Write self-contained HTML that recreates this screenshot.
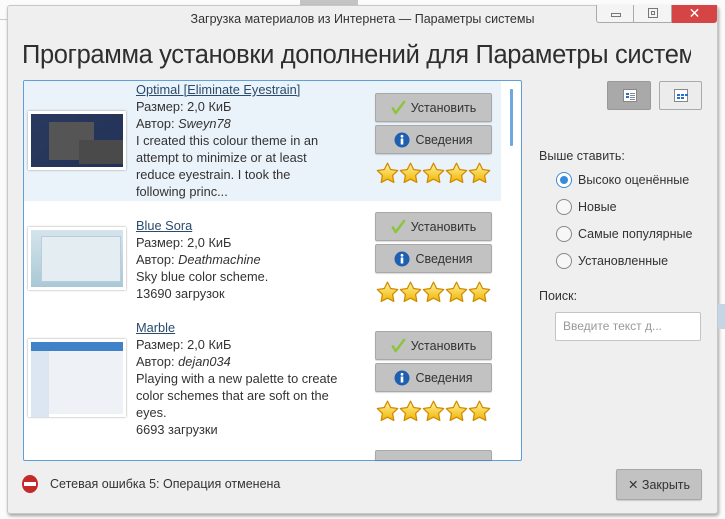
<!DOCTYPE html>
<html><head><meta charset="utf-8"><style>
*{margin:0;padding:0;box-sizing:border-box}
body{width:725px;height:519px;background:#fbfbfb;font-family:"Liberation Sans","DejaVu Sans",sans-serif;font-size:12.5px;color:#333;position:relative;overflow:hidden}
.a{position:absolute;white-space:nowrap}
.win{position:absolute;left:7px;top:5px;width:711px;height:509px;background:#efefef;border:1px solid #c8c8c8;border-radius:3px;box-shadow:1px 2px 3px rgba(0,0,0,.35)}
.btn{position:absolute;background:#c2c2c2;border:1px solid #a8a8a8;border-radius:2px;box-shadow:0 1px 1px rgba(0,0,0,.15);font-size:12.5px;color:#333;display:flex;align-items:center;justify-content:center;gap:5px}
.t{position:absolute;left:136px;line-height:17px;font-size:12.8px;color:#333}
.t u{color:#2a4a6e}
.thumb{position:absolute;left:28px;width:98px;border:3px solid #fff;box-shadow:0 0 2px rgba(0,0,0,.4)}
.stars{position:absolute;left:376px;display:flex;gap:0px}
.radio{position:absolute;left:556px;width:16px;height:16px;border:1px solid #888;border-radius:50%;background:#f7f7f7}
</style></head><body>
<div class="a" style="left:300px;top:0;width:58px;height:5px;background:#c4c4c4"></div>
<div class="a" style="left:0;top:19px;width:8px;height:1px;background:#ccc"></div>
<div class="win"></div>
<div class="a" style="left:0;top:12px;width:725px;text-align:center;font-size:12.5px;color:#333">Загрузка материалов из Интернета — Параметры системы</div>
<div class="a" style="left:596px;top:5px;width:38px;height:18px;background:#f4f4f4;border:1px solid #aaa;border-top:none;border-radius:0 0 0 3px"><div style="position:absolute;left:14px;top:8px;width:10px;height:4px;border:1px solid #777"></div></div>
<div class="a" style="left:634px;top:5px;width:38px;height:18px;background:#f4f4f4;border:1px solid #aaa;border-top:none;border-left:none"><div style="position:absolute;left:14px;top:3px;width:10px;height:10px;border:1px solid #777"></div><div style="position:absolute;left:17px;top:6px;width:4px;height:4px;border:1px solid #777"></div></div>
<div class="a" style="left:672px;top:5px;width:45px;height:18px;background:#d64545;border-radius:0 0 3px 0;color:#fff;font-weight:bold;font-size:14px;text-align:center;line-height:17px">✕</div>
<div class="a" style="left:22px;top:41px;width:669px;overflow:hidden;font-size:25.5px;letter-spacing:-0.35px;color:#2e2e2e">Программа установки дополнений для Параметры системы</div>

<div class="a" style="left:23px;top:80px;width:499px;height:381px;background:#fff;border:1px solid #5fa0dc;border-radius:2px;overflow:hidden">
 <div style="position:absolute;left:0;top:0;width:477px;height:120px;background:#eaf2fa"></div>
 <div style="position:absolute;left:486px;top:8px;width:3px;height:57px;background:#6fa8e0;border-radius:1px"></div>
</div>

<div class="thumb" style="top:111px;height:59px;background:linear-gradient(135deg,#2a3a5e,#223258)"><div style="position:absolute;left:18px;top:8px;width:45px;height:38px;background:#555"></div><div style="position:absolute;left:48px;top:26px;width:44px;height:24px;background:#4a4a4a"></div></div>
<div class="thumb" style="top:227px;height:63px;background:linear-gradient(#d4e4ec,#a9c8d6)"><div style="position:absolute;left:10px;top:6px;width:80px;height:46px;background:#e4eef2;border:1px solid #bcd"></div></div>
<div class="thumb" style="top:339px;height:78px;background:#eef2f6"><div style="position:absolute;left:0;top:0;width:92px;height:9px;background:#3f82c8"></div><div style="position:absolute;left:0;top:9px;width:18px;height:66px;background:#dbe6f2"></div></div>

<div class="t" style="top:81px"><u>Optimal [Eliminate Eyestrain]</u><br>Размер: 2,0 КиБ<br>Автор: <i>Sweyn78</i><br>I created this colour theme in an<br>attempt to minimize or at least<br>reduce eyestrain. I took the<br>following princ...</div>
<div class="t" style="top:217px"><u>Blue Sora</u><br>Размер: 2,0 КиБ<br>Автор: <i>Deathmachine</i><br>Sky blue color scheme.<br>13690 загрузок</div>
<div class="t" style="top:319px"><u>Marble</u><br>Размер: 2,0 КиБ<br>Автор: <i>dejan034</i><br>Playing with a new palette to create<br>color schemes that are soft on the<br>eyes.<br>6693 загрузки</div>

<svg width="0" height="0" style="position:absolute"><defs>
<linearGradient id="sg" x1="0" y1="0" x2="0" y2="1"><stop offset="0" stop-color="#fff3a0"/><stop offset="1" stop-color="#f0b400"/></linearGradient>
<symbol id="star" viewBox="0 0 24 24"><path d="M12 1.2l3.3 6.6 7.3 1.1-5.3 5.1 1.3 7.3L12 17.9l-6.6 3.4 1.3-7.3-5.3-5.1 7.3-1.1z" fill="url(#sg)" stroke="#d08a00" stroke-width="1.3" stroke-linejoin="round"/></symbol>
<symbol id="chk" viewBox="0 0 16 16"><path d="M2 9l3 5 9-12" fill="none" stroke="#8cc43c" stroke-width="2.6" stroke-linecap="round" stroke-linejoin="round"/></symbol>
<symbol id="inf" viewBox="0 0 16 16"><circle cx="8" cy="8" r="7.5" fill="#1f5fb0"/><circle cx="8" cy="4.3" r="1.4" fill="#fff"/><rect x="6.7" y="6.5" width="2.6" height="6" fill="#fff"/></symbol>
</defs></svg>

<div class="btn" style="left:375px;top:93px;width:117px;height:29px"><svg width="15" height="15"><use href="#chk"/></svg>Установить</div>
<div class="btn" style="left:375px;top:125px;width:117px;height:29px"><svg width="16" height="16"><use href="#inf"/></svg>Сведения</div>
<div class="stars" style="top:162px"><svg width="23" height="23"><use href="#star"/></svg><svg width="23" height="23"><use href="#star"/></svg><svg width="23" height="23"><use href="#star"/></svg><svg width="23" height="23"><use href="#star"/></svg><svg width="23" height="23"><use href="#star"/></svg></div>

<div class="btn" style="left:375px;top:212px;width:117px;height:29px"><svg width="15" height="15"><use href="#chk"/></svg>Установить</div>
<div class="btn" style="left:375px;top:244px;width:117px;height:29px"><svg width="16" height="16"><use href="#inf"/></svg>Сведения</div>
<div class="stars" style="top:281px"><svg width="23" height="23"><use href="#star"/></svg><svg width="23" height="23"><use href="#star"/></svg><svg width="23" height="23"><use href="#star"/></svg><svg width="23" height="23"><use href="#star"/></svg><svg width="23" height="23"><use href="#star"/></svg></div>

<div class="btn" style="left:375px;top:331px;width:117px;height:29px"><svg width="15" height="15"><use href="#chk"/></svg>Установить</div>
<div class="btn" style="left:375px;top:363px;width:117px;height:29px"><svg width="16" height="16"><use href="#inf"/></svg>Сведения</div>
<div class="stars" style="top:400px"><svg width="23" height="23"><use href="#star"/></svg><svg width="23" height="23"><use href="#star"/></svg><svg width="23" height="23"><use href="#star"/></svg><svg width="23" height="23"><use href="#star"/></svg><svg width="23" height="23"><use href="#star"/></svg></div>
<div class="btn" style="left:375px;top:450px;width:117px;height:10px;border-bottom:none;border-radius:2px 2px 0 0"></div>

<div class="a" style="left:607px;top:81px;width:44px;height:29px;background:#a9a9a9;border:1px solid #999;border-radius:2px"><div style="position:absolute;left:15px;top:7px;width:14px;height:13px;background:#fff;border:1px solid #888"><div style="position:absolute;left:2px;top:3px;width:3px;height:2px;background:#2a6ed0;box-shadow:0 3px 0 #2a6ed0"></div><div style="position:absolute;left:6px;top:3px;width:5px;height:1px;background:#888;box-shadow:0 2px 0 #888,0 4px 0 #888,0 6px 0 #888"></div></div></div>
<div class="a" style="left:659px;top:81px;width:43px;height:29px;background:#ececec;border:1px solid #aaa;border-radius:2px"><div style="position:absolute;left:14px;top:7px;width:14px;height:13px;background:#fff;border:1px solid #888"><div style="position:absolute;left:2px;top:4px;width:3px;height:2px;background:#2a6ed0;box-shadow:4px 0 0 #2a6ed0,8px 0 0 #2a6ed0,0 3px 0 #2a6ed0,4px 3px 0 #2a6ed0"></div></div></div>

<div class="a" style="left:539px;top:149px">Выше ставить:</div>
<div class="radio" style="top:172px;border-color:#3a8ad8;background:#fff"><div style="position:absolute;left:3px;top:3px;width:8px;height:8px;border-radius:50%;background:#3a8ad8"></div></div>
<div class="a" style="left:578px;top:173px">Высоко оценённые</div>
<div class="radio" style="top:199px"></div><div class="a" style="left:578px;top:200px">Новые</div>
<div class="radio" style="top:226px"></div><div class="a" style="left:578px;top:227px">Самые популярные</div>
<div class="radio" style="top:253px"></div><div class="a" style="left:578px;top:254px">Установленные</div>
<div class="a" style="left:539px;top:289px">Поиск:</div>
<div class="a" style="left:555px;top:312px;width:146px;height:29px;background:#fff;border:1px solid #c4c4c4;border-radius:2px;color:#999;padding:6px 0 0 7px;font-size:12px">Введите текст д...</div>
<div class="a" style="left:718px;top:304px;width:7px;height:25px;background:#c4d6e6"></div>

<div class="a" style="left:22px;top:475px;width:16px;height:18px;border-radius:50%;background:#c52a2a"><div style="position:absolute;left:2px;top:7px;width:12px;height:4px;background:#fff"></div></div>
<div class="a" style="left:50px;top:477px">Сетевая ошибка 5: Операция отменена</div>
<div class="btn" style="left:616px;top:469px;width:86px;height:31px">✕ Закрыть</div>
</body></html>
